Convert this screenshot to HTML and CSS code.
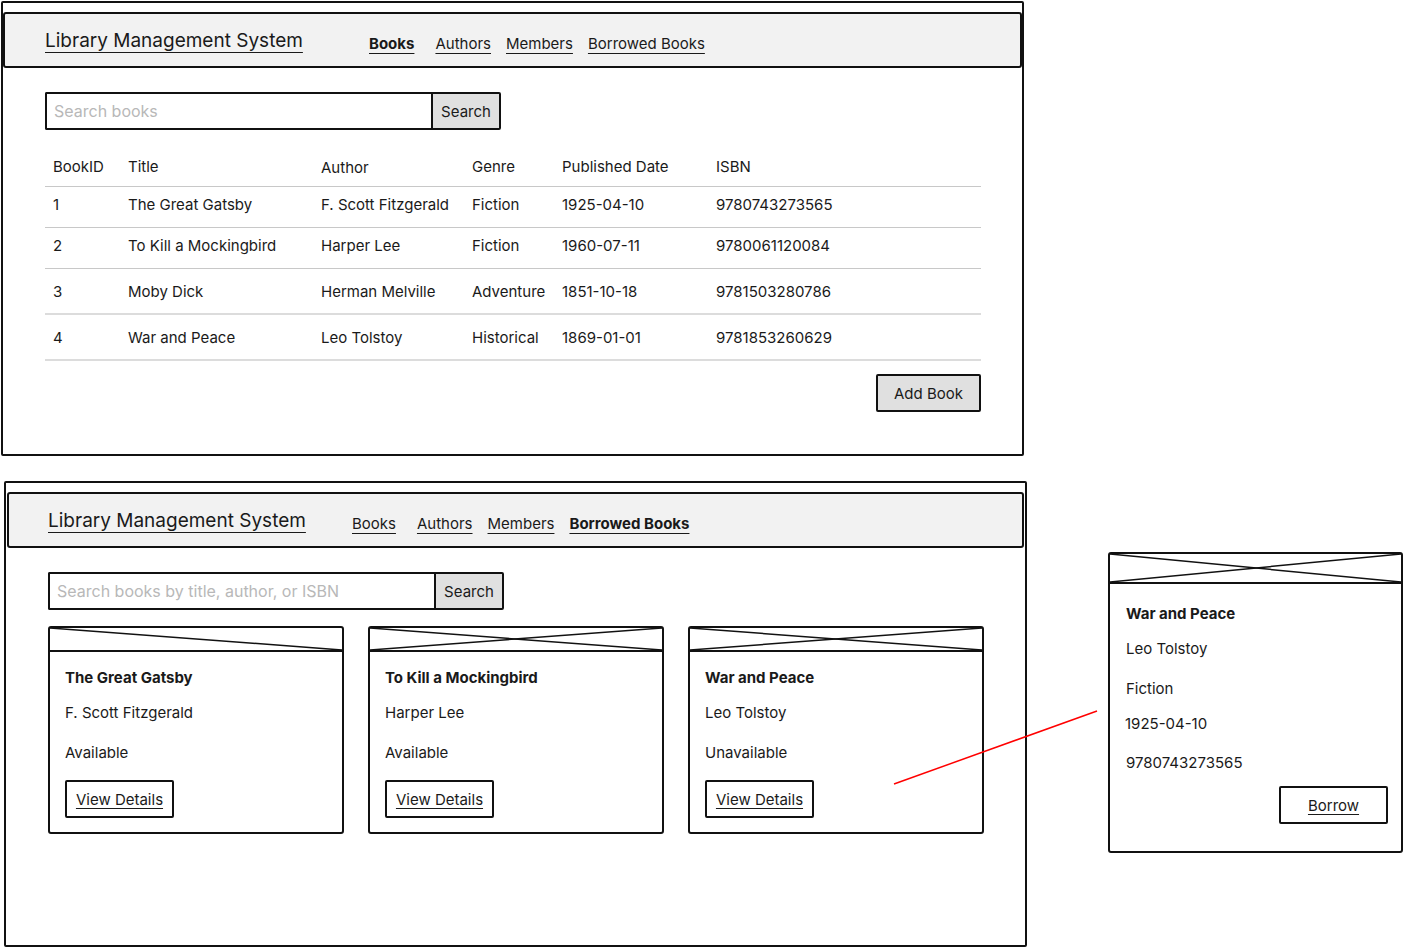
FILE: index.html
```html
<!DOCTYPE html>
<html lang="en">
<head>
<meta charset="utf-8">
<title>Library Management System</title>
<link rel="stylesheet" href="styles.css">
</head>
<body>
<div class="canvas">
  <section class="frame frame-books">
    <header class="topbar">
      <span class="brand brand-books">Library Management System</span>
      <nav class="nav">
        <span class="nav-link active first">Books</span>
        <span class="nav-link">Authors</span>
        <span class="nav-link">Members</span>
        <span class="nav-link">Borrowed Books</span>
      </nav>
    </header>
    <div class="content">
      <div class="search">
        <input class="search-input" type="text" placeholder="Search books">
        <button class="search-btn">Search</button>
      </div>
      <table class="books">
        <colgroup>
          <col class="c-id"><col class="c-title"><col class="c-author"><col class="c-genre"><col class="c-date"><col class="c-isbn">
        </colgroup>
        <thead>
          <tr><th>BookID</th><th>Title</th><th class="low">Author</th><th>Genre</th><th>Published Date</th><th>ISBN</th></tr>
        </thead>
        <tbody>
          <tr class="r-top"><td>1</td><td>The Great Gatsby</td><td>F. Scott Fitzgerald</td><td>Fiction</td><td>1925-04-10</td><td>9780743273565</td></tr>
          <tr class="r-top"><td>2</td><td>To Kill a Mockingbird</td><td>Harper Lee</td><td>Fiction</td><td>1960-07-11</td><td>9780061120084</td></tr>
          <tr class="r-mid"><td>3</td><td>Moby Dick</td><td>Herman Melville</td><td>Adventure</td><td>1851-10-18</td><td>9781503280786</td></tr>
          <tr class="r-mid"><td>4</td><td>War and Peace</td><td>Leo Tolstoy</td><td>Historical</td><td>1869-01-01</td><td>9781853260629</td></tr>
        </tbody>
      </table>
      <div class="actions">
        <button class="btn-grey">Add Book</button>
      </div>
    </div>
  </section>

  <div class="lower">
    <section class="frame frame-borrowed">
      <header class="topbar">
        <span class="brand brand-borrowed">Library Management System</span>
        <nav class="nav">
          <span class="nav-link first">Books</span>
          <span class="nav-link">Authors</span>
          <span class="nav-link">Members</span>
          <span class="nav-link active">Borrowed Books</span>
        </nav>
      </header>
      <div class="content">
        <div class="search">
          <input class="search-input" type="text" placeholder="Search books by title, author, or ISBN">
          <button class="search-btn">Search</button>
        </div>
        <div class="cards">
          <article class="card">
            <div class="thumb">
              <svg viewBox="0 0 100 10" preserveAspectRatio="none"><line x1="0" y1="0" x2="100" y2="10" vector-effect="non-scaling-stroke"/></svg>
            </div>
            <div class="card-body">
              <div class="card-title">The Great Gatsby</div>
              <div class="card-author">F. Scott Fitzgerald</div>
              <div class="card-status">Available</div>
              <button class="btn-outline">View Details</button>
            </div>
          </article>
          <article class="card">
            <div class="thumb">
              <svg viewBox="0 0 100 10" preserveAspectRatio="none"><line x1="0" y1="0" x2="100" y2="10" vector-effect="non-scaling-stroke"/><line x1="0" y1="10" x2="100" y2="0" vector-effect="non-scaling-stroke"/></svg>
            </div>
            <div class="card-body">
              <div class="card-title">To Kill a Mockingbird</div>
              <div class="card-author">Harper Lee</div>
              <div class="card-status">Available</div>
              <button class="btn-outline">View Details</button>
            </div>
          </article>
          <article class="card">
            <div class="thumb">
              <svg viewBox="0 0 100 10" preserveAspectRatio="none"><line x1="0" y1="0" x2="100" y2="10" vector-effect="non-scaling-stroke"/><line x1="0" y1="10" x2="100" y2="0" vector-effect="non-scaling-stroke"/></svg>
            </div>
            <div class="card-body">
              <div class="card-title">War and Peace</div>
              <div class="card-author">Leo Tolstoy</div>
              <div class="card-status">Unavailable</div>
              <button class="btn-outline">View Details</button>
            </div>
          </article>
        </div>
      </div>
    </section>

    <aside class="detail">
      <div class="thumb thumb-tall">
        <svg viewBox="0 0 100 10" preserveAspectRatio="none"><line x1="0" y1="0" x2="100" y2="10" vector-effect="non-scaling-stroke"/><line x1="0" y1="10" x2="100" y2="0" vector-effect="non-scaling-stroke"/></svg>
      </div>
      <div class="detail-body">
        <div class="card-title">War and Peace</div>
        <div class="d-author">Leo Tolstoy</div>
        <div class="d-genre">Fiction</div>
        <div class="d-date">1925-04-10</div>
        <div class="d-isbn">9780743273565</div>
        <div class="d-actions"><button class="btn-outline">Borrow</button></div>
      </div>
    </aside>
  </div>

  <svg class="connector" viewBox="0 0 203 73" width="203" height="73"><line x1="0" y1="73" x2="203" y2="0"/></svg>
</div>
</body>
</html>
```

FILE: styles.css
```css
* { box-sizing: border-box; }

body {
  margin: 0;
  background: #ffffff;
  color: #1a1a1a;
  font-family: Inter, "Noto Sans", "Liberation Sans", sans-serif;
}

.canvas {
  position: relative;
  width: 1403px;
  height: 949px;
  padding: 1px 0 0 1px;
  overflow: hidden;
}

/* ---------- frames ---------- */
.frame {
  width: 1023px;
  border: 2px solid #111;
  border-radius: 2px;
  background: #fff;
}
.frame-books { height: 455px; }
.frame-borrowed { height: 466px; }

.topbar {
  display: flex;
  align-items: flex-start;
  height: 56px;
  margin-top: 9px;
  padding: 15px 40px 0 40px;
  border: 2px solid #111;
  border-radius: 3px;
  background: #f2f2f2;
}
.frame-borrowed .topbar {
  margin: 9px 1px 0 1px;
  padding-left: 39px;
}

.brand {
  font-size: 19px;
  line-height: 24px;
  text-decoration: underline;
  text-underline-offset: 5px;
  text-decoration-thickness: 1px;
  text-decoration-skip-ink: none;
  color: #1a1a1a;
}
.brand-books { width: 324px; flex: none; }
.brand-borrowed { width: 304px; flex: none; }

.nav {
  display: flex;
  align-items: baseline;
  gap: 15px;
  padding-top: 5px;
}
.nav-link {
  font-size: 15px;
  line-height: 20px;
  text-decoration: underline;
  text-underline-offset: 4px;
  text-decoration-thickness: 1px;
  text-decoration-skip-ink: none;
}
.nav-link.first { margin-right: 6px; }
.nav-link.active { font-weight: 700; }

/* ---------- content ---------- */
.content {
  padding: 24px 41px 0 42px;
}

.search {
  display: flex;
  height: 38px;
}
.search-input {
  width: 386px;
  height: 38px;
  border: 2px solid #111;
  border-right: none;
  border-radius: 2px 0 0 2px;
  padding: 0 7px;
  font-family: inherit;
  font-size: 16px;
  color: #1a1a1a;
  outline: none;
  background: #fff;
}
.search-input::placeholder { color: #b8b8b8; }
.search-btn {
  width: 70px;
  height: 38px;
  border: 2px solid #111;
  border-radius: 0 2px 2px 0;
  background: #e0e0e0;
  font-family: inherit;
  font-size: 15px;
  color: #1a1a1a;
  padding: 0;
}

/* ---------- table ---------- */
.books {
  width: 936px;
  margin-top: 18px;
  border-collapse: collapse;
  table-layout: fixed;
  font-size: 15px;
  line-height: 18px;
}
.c-id { width: 75px; }
.c-title { width: 193px; }
.c-author { width: 151px; }
.c-genre { width: 90px; }
.c-date { width: 154px; }
.c-isbn { width: 273px; }

.books th {
  height: 38px;
  padding: 0 0 0 8px;
  text-align: left;
  font-weight: 400;
  vertical-align: middle;
  border-bottom: 1px solid #c8c8c8;
  white-space: nowrap;
}
.books th.low { padding-top: 2px; }
.books td {
  padding: 0 0 0 8px;
  vertical-align: top;
  white-space: nowrap;
}
.r-top td {
  height: 41px;
  padding-top: 9px;
  border-bottom: 1px solid #c8c8c8;
}
.r-mid td {
  height: 46px;
  padding-top: 14px;
  border-bottom: 2px solid #dcdcdc;
}

.actions {
  display: flex;
  justify-content: flex-end;
  width: 936px;
  margin-top: 13px;
}
.btn-grey {
  width: 105px;
  height: 38px;
  border: 2px solid #111;
  border-radius: 2px;
  background: #e0e0e0;
  font-family: inherit;
  font-size: 15px;
  color: #1a1a1a;
  padding: 0;
}

/* ---------- lower area ---------- */
.lower {
  display: flex;
  align-items: flex-start;
  margin-top: 25px;
  margin-left: 3px;
}

.cards {
  display: flex;
  gap: 24px;
  margin-top: 16px;
}
.card {
  width: 296px;
  height: 208px;
  border: 2px solid #111;
  border-radius: 3px;
}

.thumb {
  height: 24px;
  border-bottom: 2px solid #111;
}
.thumb svg {
  display: block;
  width: 100%;
  height: 100%;
}
.thumb line {
  stroke: #111;
  stroke-width: 1.5;
}
.thumb-tall { height: 30px; }

.card-body {
  padding: 16px 15px 15px 15px;
  font-size: 15px;
  line-height: 20px;
}
.card-title { font-weight: 700; font-size: 15px; line-height: 20px; }
.card-author { margin-top: 15px; }
.card-status { margin-top: 20px; }
.card-body .btn-outline { margin-top: 17px; }

.btn-outline {
  display: block;
  width: 109px;
  height: 38px;
  border: 2px solid #111;
  border-radius: 2px;
  background: #fff;
  font-family: inherit;
  font-size: 15px;
  color: #1a1a1a;
  text-decoration: underline;
  text-underline-offset: 3px;
  text-decoration-skip-ink: none;
  padding: 0;
}

/* ---------- detail card ---------- */
.detail {
  width: 295px;
  height: 301px;
  margin-left: 81px;
  margin-top: 71px;
  border: 2px solid #111;
  border-radius: 3px;
}
.detail-body {
  padding: 20px 13px 0 16px;
  font-size: 15px;
  line-height: 20px;
}
.d-author { margin-top: 15px; }
.d-genre { margin-top: 20px; }
.d-date { margin-top: 15px; margin-left: -1px; }
.d-isbn { margin-top: 19px; }
.d-actions {
  display: flex;
  justify-content: flex-end;
  margin-top: 13px;
}

/* ---------- connector ---------- */
.connector {
  position: absolute;
  left: 894px;
  top: 711px;
  overflow: visible;
}
.connector line {
  stroke: #ff0000;
  stroke-width: 1.5;
}
```
